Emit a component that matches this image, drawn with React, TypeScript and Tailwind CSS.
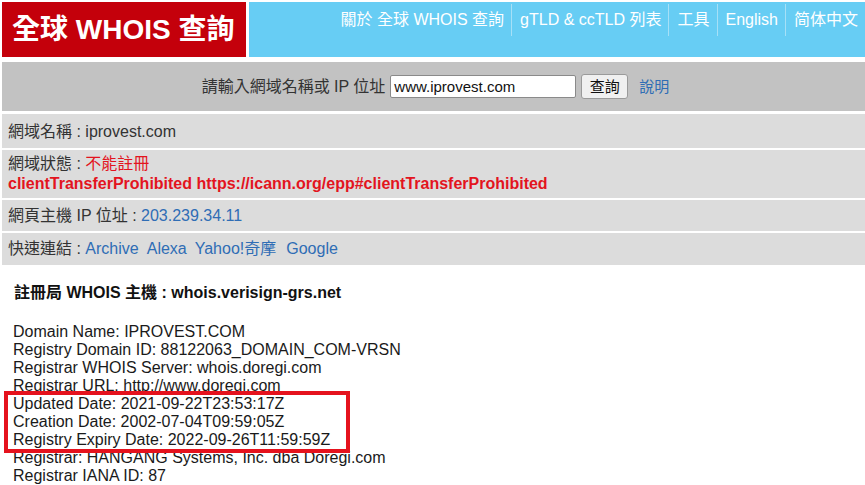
import React from "react";

const font = { fontFamily: '"Liberation Sans", Arial, "Noto Sans CJK TC", sans-serif' };

function NavItem({ children, first, last }: { children: React.ReactNode; first?: boolean; last?: boolean }) {
  return (
    <div
      className={
        "flex items-center h-[32px] text-[16px] leading-[20px] text-white whitespace-nowrap " +
        (first ? "pl-[8px] pr-[7px] " : "pl-[8px] pr-[7px] border-l border-[#a6e0f7] ") +
        (last ? "pr-[3px]" : "")
      }
    >
      {children}
    </div>
  );
}

export default function App() {
  const lines = [
    "Domain Name: IPROVEST.COM",
    "Registry Domain ID: 88122063_DOMAIN_COM-VRSN",
    "Registrar WHOIS Server: whois.doregi.com",
    "Registrar URL: http://www.doregi.com",
    "Updated Date: 2021-09-22T23:53:17Z",
    "Creation Date: 2002-07-04T09:59:05Z",
    "Registry Expiry Date: 2022-09-26T11:59:59Z",
    "Registrar: HANGANG Systems, Inc. dba Doregi.com",
    "Registrar IANA ID: 87",
  ];
  return (
    <div className="w-[865px] h-[485px] overflow-hidden bg-white text-[#333]" style={font}>
      {/* Header */}
      <div className="flex pt-[2px] pl-[2px] gap-[3px] h-[57px]">
        <div className="w-[244px] h-[55px] bg-[#c4000b] flex items-center pl-[10px]">
          <span className="text-white font-bold text-[28px] leading-[32px] whitespace-nowrap">全球 WHOIS 查詢</span>
        </div>
        <div className="flex-1 h-[55px] bg-[#67cdf4] flex justify-end items-start pt-[2px]">
          <NavItem first>關於 全球 WHOIS 查詢</NavItem>
          <NavItem>gTLD &amp; ccTLD 列表</NavItem>
          <NavItem>工具</NavItem>
          <NavItem>English</NavItem>
          <NavItem last>简体中文</NavItem>
        </div>
      </div>

      {/* Search bar */}
      <div className="ml-[2px] mt-[5px] h-[49px] bg-[#c2c2c2] flex items-center justify-center text-[16px] leading-[20px] text-[#333] pl-[4px]">
        <span className="whitespace-nowrap">請輸入網域名稱或 IP 位址</span>
        <div className="ml-[5px] w-[186px] h-[23px] bg-white border border-[#8a8a8a] rounded-[2px] flex items-center pl-[3px] text-[15px] text-[#111]">
          www.iprovest.com
        </div>
        <div className="ml-[5px] w-[47px] h-[25px] bg-[#f0f0f0] border border-[#9a9a9a] rounded-[3px] flex items-center justify-center text-[15px] text-[#111]">
          查詢
        </div>
        <span className="ml-[11px] text-[#2f6db5] text-[15px]">說明</span>
      </div>

      {/* Info rows */}
      <div className="ml-[2px] mt-[3px] h-[34px] bg-[#dcdcdc] flex items-center pl-[6px] pt-[1px] text-[16px] leading-[20px]">
        <span>網域名稱 : iprovest.com</span>
      </div>
      <div className="ml-[2px] mt-[2px] h-[48px] bg-[#dcdcdc] pl-[6px] pt-[4px] text-[16px] leading-[20px]">
        <div>
          網域狀態 : <span className="text-[#e3141e]">不能註冊</span>
        </div>
        <div className="text-[#e3141e] font-bold text-[16px] whitespace-nowrap">
          clientTransferProhibited https://icann.org/epp#clientTransferProhibited
        </div>
      </div>
      <div className="ml-[2px] mt-[2px] h-[31px] bg-[#dcdcdc] flex items-center pl-[6px] text-[16px] leading-[20px]">
        <span>
          網頁主機 IP 位址 : <span className="text-[#2f6db5]">203.239.34.11</span>
        </span>
      </div>
      <div className="ml-[2px] mt-[2px] h-[32px] bg-[#dcdcdc] flex items-center pl-[6px] text-[16px] leading-[20px] whitespace-nowrap">
        <span>快速連結 :&nbsp;</span>
        <span className="text-[#2f6db5] flex gap-[8px]">
          <span>Archive</span>
          <span>Alexa</span>
          <span>Yahoo!奇摩</span>
          <span className="ml-[2px]">Google</span>
        </span>
      </div>

      {/* WHOIS detail */}
      <div className="relative pl-[13px]">
        <div className="pt-[18px] text-[16px] leading-[20px] font-bold text-[#111] whitespace-nowrap pl-[1px]">
          註冊局 WHOIS 主機 : whois.verisign-grs.net
        </div>
        <div className="mt-[20px] text-[16px] leading-[18px] text-[#1a1a1a] whitespace-nowrap">
          {lines.map((l) => (
            <div key={l}>{l}</div>
          ))}
        </div>
        <div className="absolute left-[4px] top-[126px] w-[346px] h-[62px] border-[4px] border-[#e5121d]" />
      </div>
    </div>
  );
}
